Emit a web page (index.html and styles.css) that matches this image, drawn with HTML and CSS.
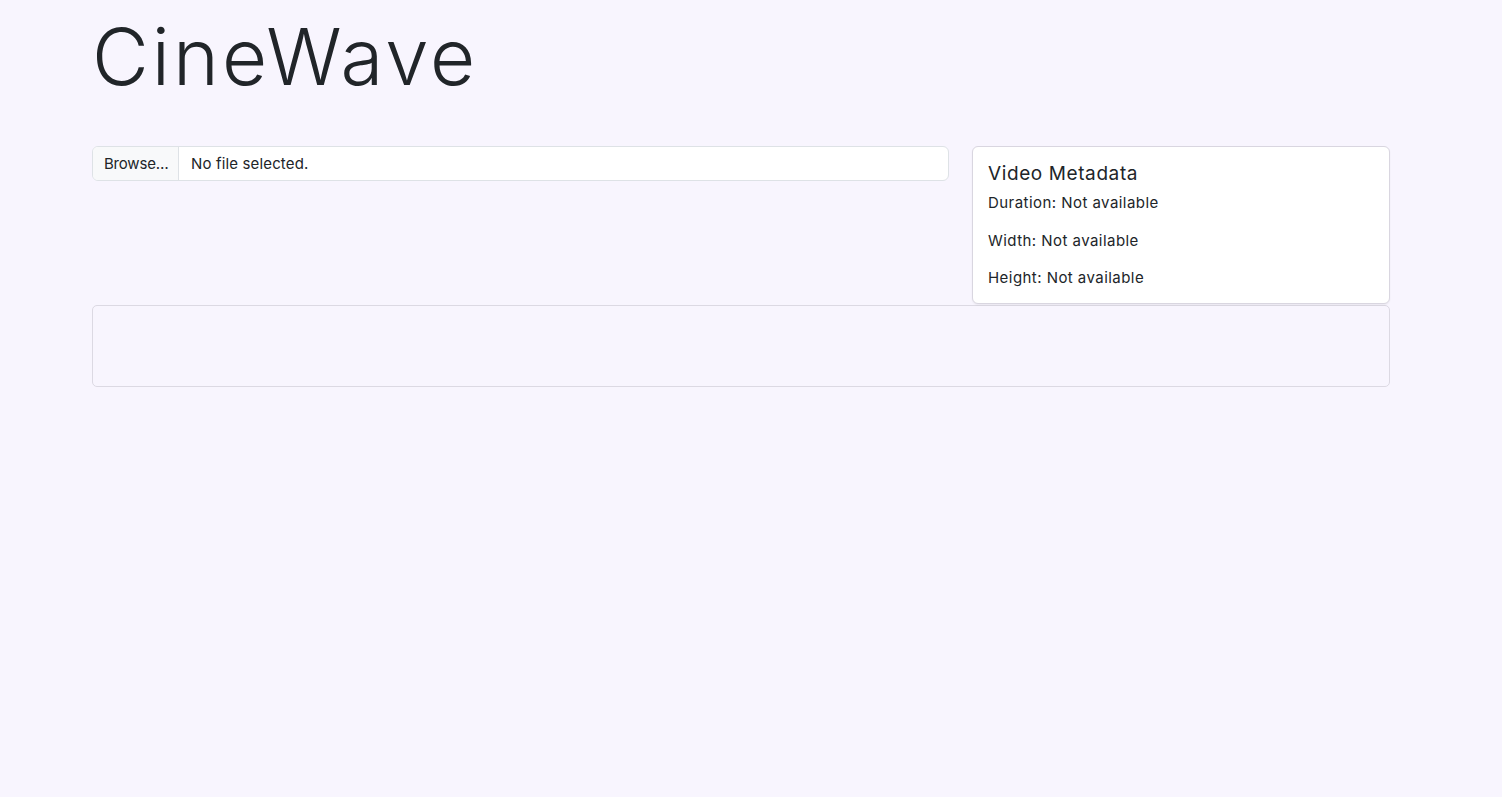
FILE: index.html
```html
<!DOCTYPE html>
<html lang="en">
<head>
<meta charset="utf-8">
<title>CineWave</title>
<link rel="stylesheet" href="styles.css">
</head>
<body>
<main class="container">
  <h1 class="brand">CineWave</h1>
  <div class="top-row">
    <div class="upload-col">
      <label class="file-input">
        <span class="file-button">Browse…</span>
        <span class="file-name">No file selected.</span>
      </label>
    </div>
    <section class="meta-card">
      <h5 class="meta-title">Video Metadata</h5>
      <p class="meta-line">Duration: Not available</p>
      <p class="meta-line">Width: Not available</p>
      <p class="meta-line">Height: Not available</p>
    </section>
  </div>
  <div class="player-box"></div>
</main>
</body>
</html>
```
FILE: styles.css
```css
* { box-sizing: border-box; }
html, body {
  margin: 0;
  padding: 0;
  background: #f8f5fe;
  color: #212529;
  font-family: "Inter", "Noto Sans", sans-serif;
}
.container {
  width: 1298px;
  margin-left: 92px;
}
.brand {
  margin: 0;
  padding-top: 10px;
  height: 146px;
  font-size: 78px;
  font-weight: 300;
  line-height: 94px;
  letter-spacing: 3px;
}
.top-row {
  display: flex;
  gap: 23px;
  align-items: flex-start;
}
.upload-col {
  width: 857px;
}
.file-input {
  display: flex;
  height: 35px;
  border: 1px solid #dee2e6;
  border-radius: 6px;
  background: #fff;
  overflow: hidden;
  font-size: 15px;
  cursor: pointer;
}
.file-button {
  display: flex;
  align-items: center;
  width: 86px;
  padding-left: 11px;
  background: #f8f9fa;
  border-right: 1px solid #dee2e6;
  letter-spacing: -0.2px;
}
.file-name {
  display: flex;
  align-items: center;
  padding-left: 12px;
  letter-spacing: 0.15px;
}
.meta-card {
  width: 418px;
  background: #fff;
  border: 1px solid #d9d6e0;
  border-radius: 6px;
  padding: 15px 15px 13px;
  box-shadow: 0 1px 2px rgba(0,0,0,0.06);
}
.meta-title {
  margin: 0 0 6px;
  font-size: 19px;
  font-weight: 400;
  line-height: 24px;
  letter-spacing: 0.6px;
}
.meta-line {
  margin: 0 0 15px;
  font-size: 15px;
  line-height: 22.5px;
  letter-spacing: 0.45px;
}
.meta-line:last-child { margin-bottom: 0; }
.player-box {
  height: 82px;
  border: 1px solid #dcd9e3;
  border-radius: 5px;
  margin-top: 1px;
}
```
